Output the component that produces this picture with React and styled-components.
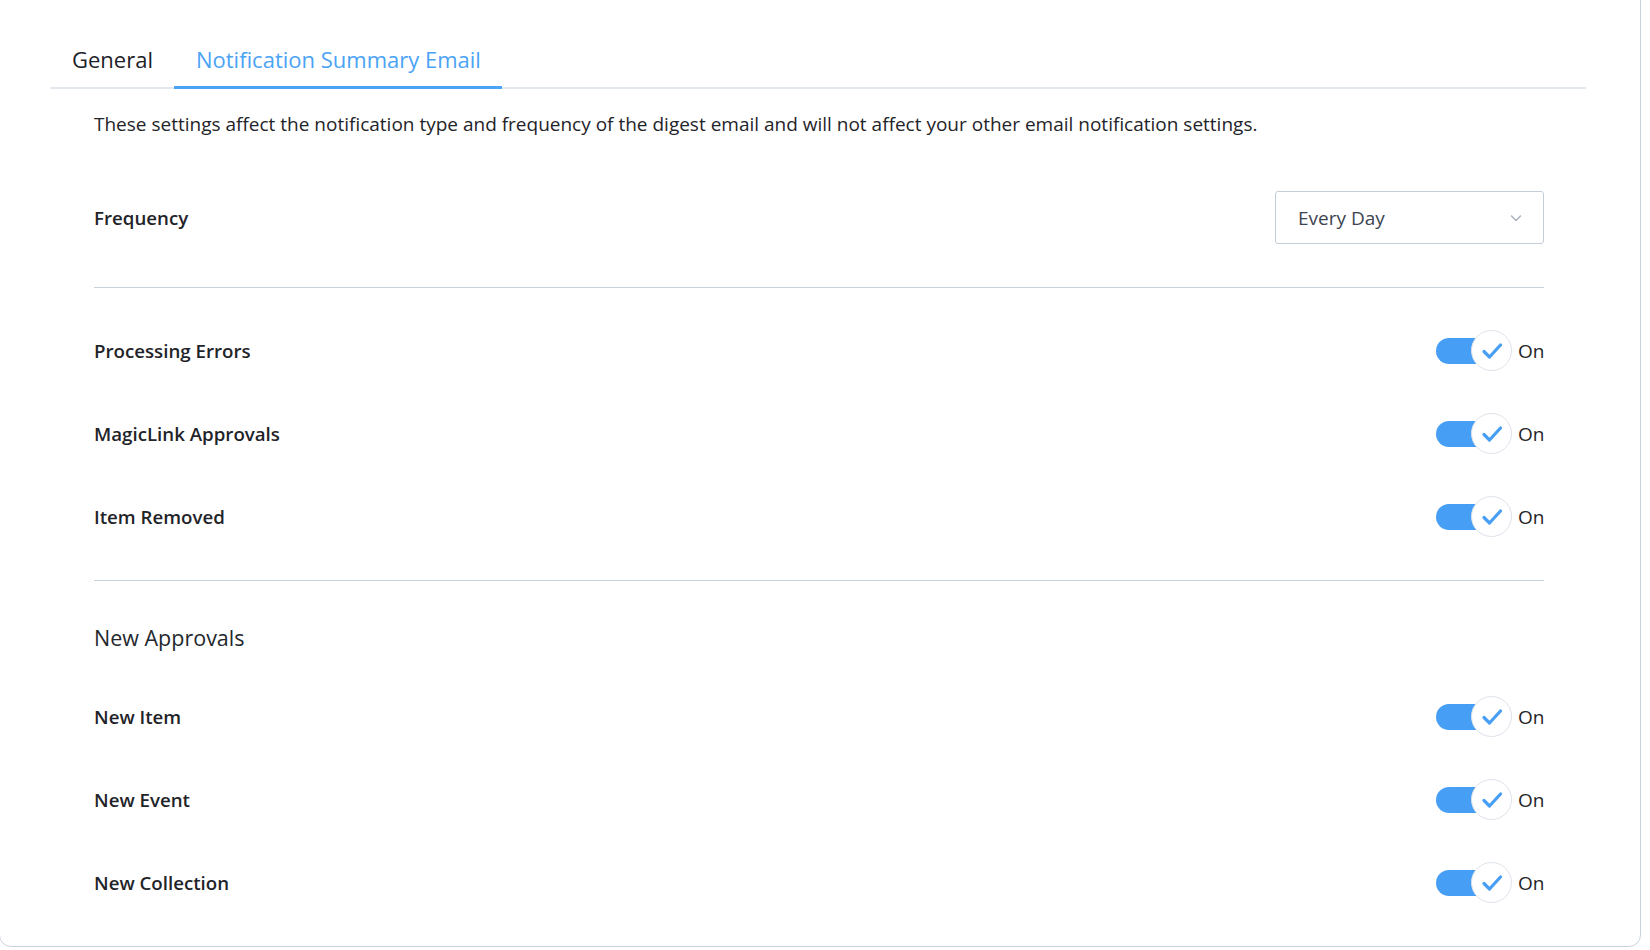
import React, { useState } from "react";
import styled, { createGlobalStyle } from "styled-components";

const GlobalStyle = createGlobalStyle`
  html, body {
    margin: 0;
    padding: 0;
    background: #fff;
    font-family: "Open Sans", Lato, sans-serif;
    color: #1f2429;
    overflow: hidden;
  }
`;

const settings = [
  { id: "processing", label: "Processing Errors" },
  { id: "magiclink", label: "MagicLink Approvals" },
  { id: "removed", label: "Item Removed" },
];

const approvals = [
  { id: "item", label: "New Item" },
  { id: "event", label: "New Event" },
  { id: "collection", label: "New Collection" },
];

const Toggle = ({ on, onClick }) => (
  <ToggleWrap onClick={onClick}>
    <Switch>
      <Track />
      <Knob>
        <svg width="22" height="18" viewBox="0 0 22 18" fill="none">
          <path
            d="M3 9.5 L8.5 15 L19.5 3"
            stroke="#479ef5"
            strokeWidth="3.2"
            strokeLinecap="round"
            strokeLinejoin="round"
          />
        </svg>
      </Knob>
    </Switch>
    <ToggleText>{on ? "On" : "Off"}</ToggleText>
  </ToggleWrap>
);

const App = () => {
  const [values, setValues] = useState({});
  const isOn = (id) => values[id] !== false;
  const flip = (id) => setValues((v) => ({ ...v, [id]: !isOn(id) }));

  return (
    <>
      <GlobalStyle />
      <Card>
        <Tabs>
          <Tab>General</Tab>
          <Tab active>Notification Summary Email</Tab>
        </Tabs>
        <Content>
          <Description>
            These settings affect the notification type and frequency of the
            digest email and will not affect your other email notification
            settings.
          </Description>

          <FrequencyRow>
            <Label>Frequency</Label>
            <Select>
              <span>Every Day</span>
              <svg width="14" height="14" viewBox="0 0 14 14" fill="none">
                <path
                  d="M2.5 5 L7 9.5 L11.5 5"
                  stroke="#aab3bd"
                  strokeWidth="1.5"
                  strokeLinecap="round"
                  strokeLinejoin="round"
                />
              </svg>
            </Select>
          </FrequencyRow>

          <Section>
            {settings.map(({ id, label }) => (
              <Row key={id}>
                <Label>{label}</Label>
                <Toggle on={isOn(id)} onClick={() => flip(id)} />
              </Row>
            ))}
          </Section>

          <Section last>
            <SectionTitle>New Approvals</SectionTitle>
            {approvals.map(({ id, label }) => (
              <Row key={id}>
                <Label>{label}</Label>
                <Toggle on={isOn(id)} onClick={() => flip(id)} />
              </Row>
            ))}
          </Section>
        </Content>
      </Card>
    </>
  );
};

export default App;

const Card = styled.div`
  box-sizing: border-box;
  width: 1642px;
  margin: -14px 0 0 -1px;
  padding: 57px 54px 22px 50px;
  background: #fff;
  border: 1px solid #c9d2dc;
  border-radius: 12px;
`;

const Tabs = styled.div`
  display: flex;
  border-bottom: 2px solid #e3e8ee;
`;

const Tab = styled.div`
  padding: 0 21px 12px 22px;
  margin-bottom: -2px;
  font-size: 22px;
  line-height: 30px;
  color: ${(p) => (p.active ? "#4ba3f6" : "#1c2127")};
  border-bottom: 3px solid ${(p) => (p.active ? "#4ba3f6" : "transparent")};
  cursor: pointer;
`;

const Content = styled.div`
  padding: 0 42px 0 44px;
`;

const Description = styled.p`
  margin: 22px 0 0;
  font-size: 19px;
  line-height: 26px;
  color: #1f2429;
`;

const FrequencyRow = styled.div`
  display: flex;
  align-items: center;
  justify-content: space-between;
  margin-top: 54px;
  padding-bottom: 43px;
  border-bottom: 1px solid #c9d2dc;
`;

const Label = styled.div`
  font-size: 18.7px;
  font-weight: 600;
  color: #1f2429;
`;

const Select = styled.div`
  box-sizing: border-box;
  display: flex;
  align-items: center;
  justify-content: space-between;
  width: 269px;
  height: 53px;
  padding: 0 20px 0 22px;
  border: 1px solid #c5ced8;
  border-radius: 3px;
  font-size: 19px;
  color: #3b4452;
`;

const Section = styled.div`
  padding: 21px 0 ${(p) => (p.last ? "0" : "22px")};
  border-bottom: ${(p) => (p.last ? "none" : "1px solid #c9d2dc")};
`;

const SectionTitle = styled.div`
  font-size: 21.5px;
  line-height: 30px;
  color: #23282d;
  padding: 21px 0 22px;
`;

const Row = styled.div`
  display: flex;
  align-items: center;
  justify-content: space-between;
  height: 83px;
`;

const ToggleWrap = styled.div`
  display: flex;
  align-items: center;
  gap: 6px;
  cursor: pointer;
`;

const Switch = styled.div`
  position: relative;
  width: 76px;
  height: 41px;
  display: flex;
  align-items: center;
`;

const Track = styled.div`
  width: 56px;
  height: 26px;
  border-radius: 13px;
  background: #479ef5;
`;

const Knob = styled.div`
  position: absolute;
  left: 35px;
  top: 0;
  box-sizing: border-box;
  width: 41px;
  height: 41px;
  border-radius: 50%;
  background: #fff;
  border: 1px solid #dde3ea;
  display: flex;
  align-items: center;
  justify-content: center;
`;

const ToggleText = styled.span`
  font-size: 19px;
  color: #1f2429;
  width: 26px;
`;
